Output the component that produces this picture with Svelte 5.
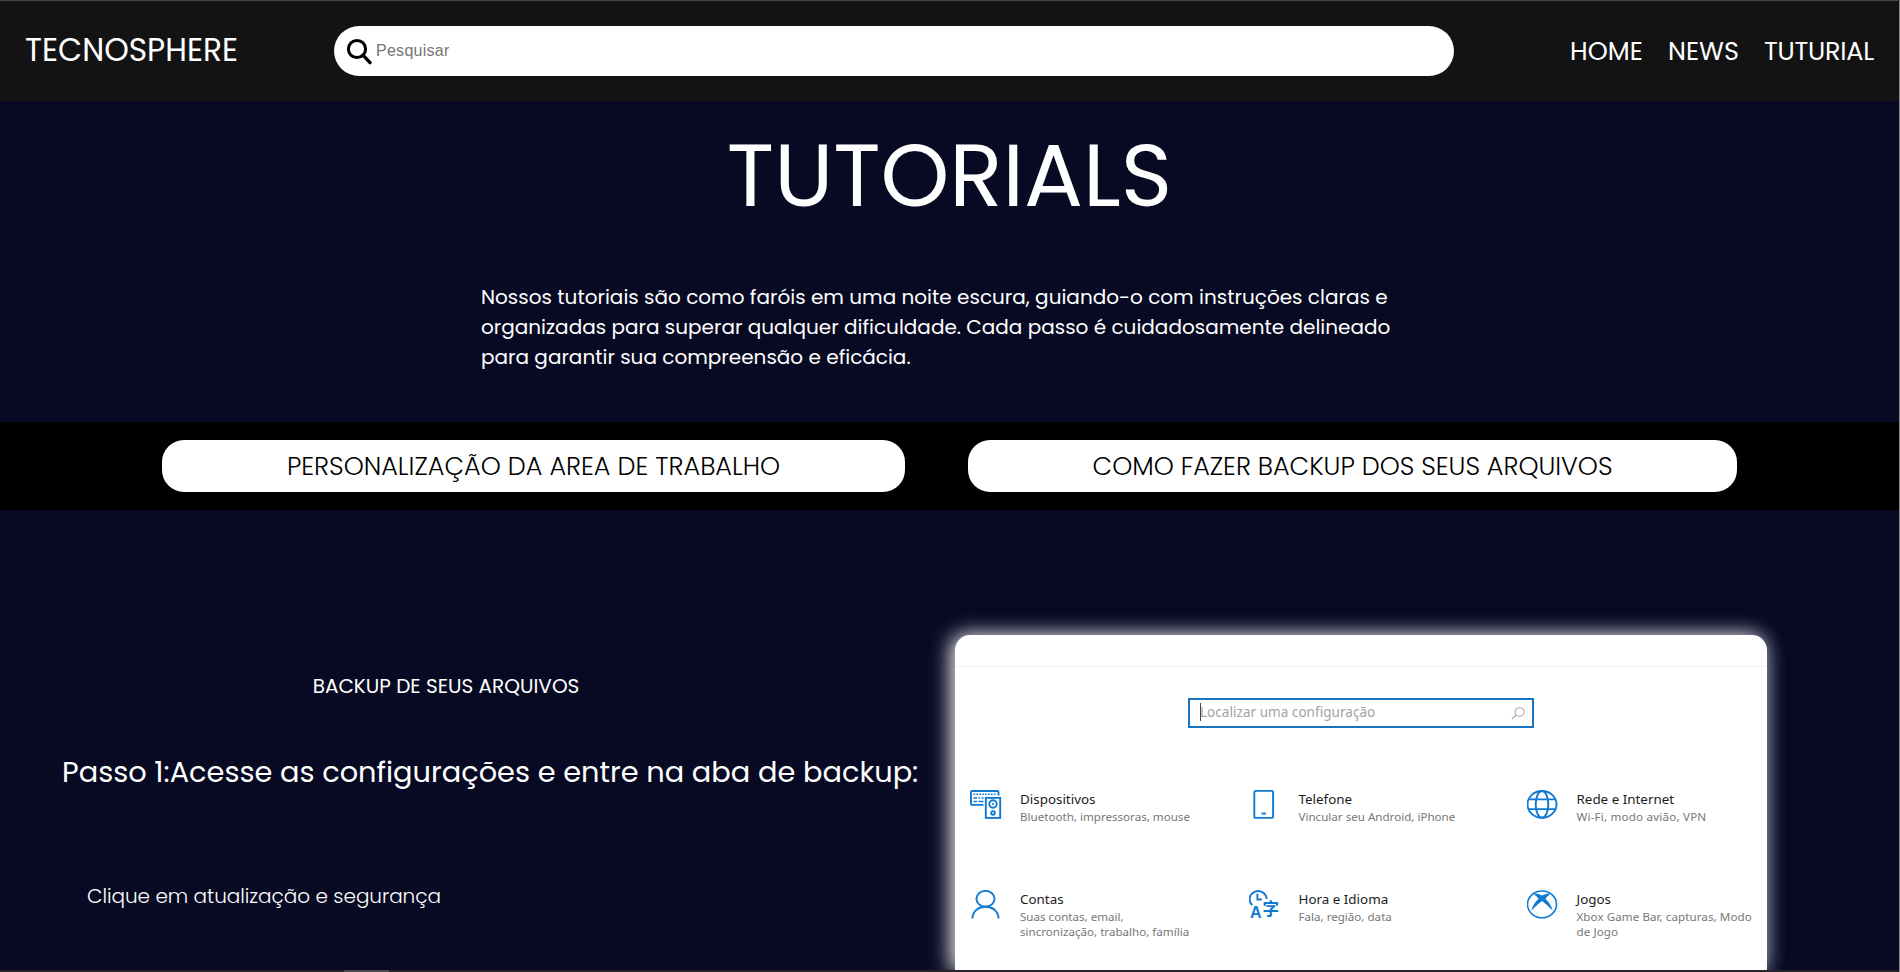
<script>
  const nav = [
    { label: 'HOME', cls: 'home' },
    { label: 'NEWS', cls: 'news' },
    { label: 'TUTURIAL', cls: 'tut' }
  ];

  const intro = [
    'Nossos tutoriais são como faróis em uma noite escura, guiando-o com instruções claras e',
    'organizadas para superar qualquer dificuldade. Cada passo é cuidadosamente delineado',
    'para garantir sua compreensão e eficácia.'
  ];

  const settings = [
    { icon: 'devices', title: 'Dispositivos', lines: ['Bluetooth, impressoras, mouse'] },
    { icon: 'phone', title: 'Telefone', lines: ['Vincular seu Android, iPhone'] },
    { icon: 'globe', title: 'Rede e Internet', lines: ['Wi-Fi, modo avião, VPN'] },
    { icon: 'user', title: 'Contas', lines: ['Suas contas, email,', 'sincronização, trabalho, família'] },
    { icon: 'time', title: 'Hora e Idioma', lines: ['Fala, região, data'] },
    { icon: 'games', title: 'Jogos', lines: ['Xbox Game Bar, capturas, Modo', 'de Jogo'] }
  ];
</script>

<div class="page">
  <header>
    <div class="logo">TECNOSPHERE</div>
    <label class="search">
      <svg width="27" height="27" viewBox="0 0 27 27" fill="none" stroke="#000">
        <circle cx="11" cy="11" r="8.6" stroke-width="3" />
        <path d="M17 17.2 24 24.6" stroke-width="3.4" stroke-linecap="round" />
      </svg>
      <input placeholder="Pesquisar" />
    </label>
    <nav>
      {#each nav as n}<span class={n.cls}>{n.label}</span>{/each}
    </nav>
  </header>

  <h1>TUTORIALS</h1>
  <p class="intro">
    {#each intro as l}<span>{l}</span>{/each}
  </p>

  <div class="tabs">
    <button class="t1">PERSONALIZAÇÃO DA AREA DE TRABALHO</button>
    <button class="t2">COMO FAZER BACKUP DOS SEUS ARQUIVOS</button>
  </div>

  <section>
    <div class="steps">
      <h2>BACKUP DE SEUS ARQUIVOS</h2>
      <h3>Passo 1:Acesse as configurações e entre na aba de backup:</h3>
      <p>Clique em atualização e segurança</p>
    </div>

    <div class="card">
      <div class="card-top"></div>
      <div class="find">
        <i></i>
        <span>Localizar uma configuração</span>
        <svg width="14" height="13" viewBox="0 0 14 13" fill="none" stroke="#aaa" stroke-width="1.1">
          <ellipse cx="8.6" cy="5" rx="4.6" ry="4.3" />
          <path d="M5.2 8 .8 12" />
        </svg>
      </div>
      <div class="grid">
        {#each settings as s}
          <div class="item">
            <svg class="ico" width="32" height="30" viewBox="0 0.5 32 30" fill="none" stroke="#1079d2" stroke-width="1.9">
              {#if s.icon === 'devices'}
                <path d="M13.5 15.4H2Q1 15.4 1 14.2V2.6Q1 1.5 2.2 1.5H27.3Q28.5 1.5 28.5 2.7V6" />
                <path d="M3.5 4.8H26" stroke-width="1.6" stroke-dasharray="1.7 1.2" />
                <path d="M3.5 8.5H7M8.5 8.5H10M11.5 8.5H13.5M3.5 12H7M8.5 12H13.5" stroke-width="1.6" />
                <rect x="15.8" y="8.4" width="14.4" height="20" />
                <circle cx="23" cy="14.5" r="3.7" />
                <circle cx="23" cy="14.5" r="1" fill="#1079d2" stroke="none" />
                <circle cx="23" cy="23.4" r="1.8" />
              {:else if s.icon === 'phone'}
                <rect x="5.3" y="1.4" width="18.8" height="27" rx="1.6" />
                <path d="M12.5 24H17" />
              {:else if s.icon === 'globe'}
                <ellipse cx="15" cy="14.9" rx="14.5" ry="13.4" />
                <ellipse cx="15" cy="14.9" rx="6.3" ry="13.4" />
                <path d="M1.5 9.9H28.5M1.5 19.6H28.5" />
              {:else if s.icon === 'user'}
                <ellipse cx="15.5" cy="9.3" rx="9.1" ry="7.9" />
                <path d="M2.4 29C2.8 21.4 8.5 17.2 15.5 17.2S28.2 21.4 28.6 29" />
              {:else if s.icon === 'time'}
                <path d="M3.3 15.6A8.5 8.1 0 1 1 17.6 9.6" />
                <path d="M8.4 4.2V10H12.8" />
                <text class="a" x="1" y="28.8">A</text>
                <text class="zi" x="13.4" y="25.4">字</text>
              {:else}
                <ellipse cx="15" cy="14.9" rx="14.5" ry="13.4" stroke-width="1.6" />
                <path
                  d="M6 4Q10.5 3.4 15 6 19.5 3.4 24 4 21 6 18.4 9.2 23.8 14 25.8 21.2 20.6 15.4 15 11.4 9.4 15.4 4.2 21.2 6.2 14 11.6 9.2 9 6 6 4Z"
                  fill="#1079d2"
                  stroke="none"
                />
              {/if}
            </svg>
            <div class="txt">
              <b>{s.title}</b>
              {#each s.lines as l}<span class={s.icon}>{l}</span>{/each}
            </div>
          </div>
        {/each}
      </div>
    </div>
  </section>
  <footer><div></div></footer>
</div>

<style>
  :global(body) {
    margin: 0;
    background: #080a23;
  }
  .page {
    box-sizing: border-box;
    width: 1900px;
    height: 972px;
    overflow: hidden;
    display: flex;
    flex-direction: column;
    background: #080a23;
    border-top: 1px solid #444;
    border-right: 1px solid #85858a;
    color: #fff;
    font-family: Poppins, Inter, sans-serif;
  }
  header {
    flex: none;
    height: 100px;
    background: #131313;
    display: flex;
    align-items: center;
  }
  .logo {
    width: 309px;
    padding: 0 0 2px 25px;
    font-size: 31.3px;
    white-space: nowrap;
  }
  .search {
    width: 1120px;
    height: 50px;
    box-sizing: border-box;
    border-radius: 25px;
    background: #fff;
    display: flex;
    align-items: center;
    padding-left: 12px;
  }
  .search svg {
    margin-top: 1px;
  }
  .search input {
    flex: 1;
    border: 0;
    outline: 0;
    background: none;
    padding: 0 0 0 3px;
    margin: 0 20px 1px 0;
    font: 16px 'Liberation Sans', Arial, sans-serif;
    letter-spacing: 0.27px;
  }
  .search input::placeholder {
    color: #757575;
  }
  nav {
    display: grid;
    grid-template-columns: 98px 96px 1fr;
    margin-left: 116px;
    font-size: 25.5px;
    white-space: nowrap;
  }
  .tut {
    letter-spacing: -0.25px;
  }
  h1 {
    margin: 11px 0 0;
    text-align: center;
    font-size: 87.5px;
    font-weight: 400;
    line-height: 128px;
  }
  .intro {
    margin: 42px 0 50px 481px;
    font-size: 20px;
    line-height: 30px;
  }
  .intro span {
    display: block;
    white-space: nowrap;
  }
  .tabs {
    flex: none;
    height: 88px;
    background: #000;
    display: flex;
    align-items: center;
    gap: 63px;
    padding-left: 162px;
  }
  .tabs button {
    height: 52px;
    border: 0;
    border-radius: 22px;
    background: #fff;
    color: #000;
    padding: 0;
    font: 300 25.5px Poppins, Inter, sans-serif;
    white-space: nowrap;
  }
  .t1 {
    width: 743px;
  }
  .t2 {
    width: 769px;
    letter-spacing: -0.04px;
  }
  section {
    flex: 1;
    min-height: 0;
    display: flex;
    padding-top: 125px;
  }
  .steps {
    width: 955px;
    flex: none;
  }
  .steps h2 {
    margin: 35.5px 0 0;
    width: 892px;
    text-align: center;
    font-size: 20px;
    font-weight: 400;
    line-height: 30px;
  }
  .steps h3 {
    margin: 50.5px 0 0 62px;
    font-size: 28.8px;
    font-weight: 400;
    line-height: 42px;
    white-space: nowrap;
  }
  .steps p {
    margin: 88px 0 0 87px;
    font-size: 20px;
    font-weight: 300;
    line-height: 30px;
    letter-spacing: -0.04px;
  }
  .card {
    width: 812px;
    background: #fff;
    border-radius: 15px 15px 0 0;
    box-shadow: -4px 0 20px 1px rgba(255, 250, 250, 0.85), 2px 0 20px rgba(120, 160, 210, 0.25);
    font-family: 'Noto Sans', 'Open Sans', sans-serif;
  }
  .card-top {
    height: 31px;
    border-bottom: 1px solid #efefef;
  }
  .find {
    box-sizing: border-box;
    width: 346px;
    height: 30px;
    margin: 31px 0 0 233px;
    border: 2px solid #1874bf;
    display: flex;
    align-items: center;
    padding: 0 7px 0 10px;
    font-size: 13.5px;
    color: #a3a3a3;
  }
  .find i {
    width: 1px;
    height: 18px;
    background: #444;
    margin-right: -1px;
    margin-top: -3px;
  }
  .find span {
    flex: 1;
    line-height: 18px;
    margin-top: -3px;
    letter-spacing: 0.04px;
  }
  .grid {
    display: grid;
    grid-template-columns: 278.5px 278px 1fr;
    grid-auto-rows: 100px;
    margin: 61.5px 0 0 15px;
  }
  .item {
    display: flex;
    gap: 18px;
  }
  .ico {
    flex: none;
  }
  .ico text {
    fill: #1079d2;
    stroke: none;
  }
  .a {
    font: bold 16px 'Liberation Sans', sans-serif;
  }
  .zi {
    font: bold 16.5px 'Noto Sans CJK SC', sans-serif;
  }
  .txt {
    white-space: nowrap;
  }
  .txt b {
    display: block;
    font-weight: 400;
    font-size: 13.4px;
    line-height: 19px;
    margin-bottom: 0.5px;
    color: #1c1c1c;
  }
  .txt span {
    display: block;
    font-size: 11.6px;
    line-height: 15.4px;
    color: #777;
  }
  .txt .globe {
    letter-spacing: 0.2px;
  }
  .txt .games {
    letter-spacing: 0.07px;
  }
  footer {
    position: relative;
    z-index: 1;
    flex: none;
    height: 2px;
    background: #272529;
  }
  footer div {
    width: 45px;
    height: 2px;
    margin-left: 344px;
    background: #4b494c;
  }
</style>
